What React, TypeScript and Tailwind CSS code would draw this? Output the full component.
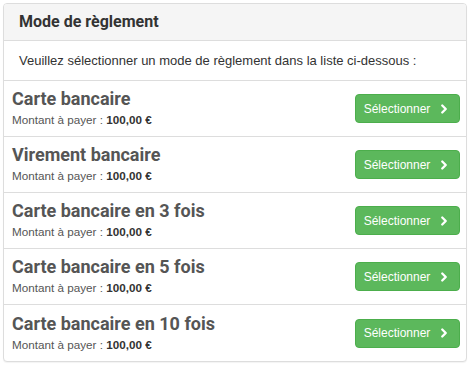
import { ChevronRight } from 'lucide-react';

const modes = [
  'Carte bancaire',
  'Virement bancaire',
  'Carte bancaire en 3 fois',
  'Carte bancaire en 5 fois',
  'Carte bancaire en 10 fois',
];

export default function App() {
  return (
    <div className="p-[3px] font-['Liberation_Sans',Arial,sans-serif] text-[#333]">
      <div className="w-[464px] overflow-hidden rounded border border-[#ddd] bg-white shadow-[0_1px_1px_rgba(0,0,0,0.05)]">
        <div className="flex h-[37px] items-center border-b border-[#ddd] bg-[#f5f5f5] px-[15px]">
          <h3 className="font-['Roboto',sans-serif] text-[16px] font-bold text-[#333]">Mode de règlement</h3>
        </div>
        <div className="flex h-[40px] items-center border-b border-[#ddd] px-[15px] text-[13px]">
          Veuillez sélectionner un mode de règlement dans la liste ci-dessous :
        </div>
        {modes.map((name, i) => (
          <div
            key={name}
            className={`flex h-[56px] items-center justify-between pl-[8px] pr-[6px] ${i < modes.length - 1 ? 'border-b border-[#ddd]' : ''}`}
          >
            <div className="-mt-[2px] flex flex-col">
              <span className="font-['Roboto',sans-serif] text-[18px] font-bold leading-[22px] text-[#555]">{name}</span>
              <span className="mt-[3px] text-[11.7px] leading-[14px] text-[#555]">
                Montant à payer : <strong className="text-[#333]">100,00 €</strong>
              </span>
            </div>
            <button className="flex h-[29px] w-[105px] items-center justify-center gap-[7px] rounded border border-[#4cae4c] bg-[#5cb85c] text-[12px] text-white">
              Sélectionner
              <ChevronRight className="h-[14px] w-[14px]" strokeWidth={4} />
            </button>
          </div>
        ))}
      </div>
    </div>
  );
}
